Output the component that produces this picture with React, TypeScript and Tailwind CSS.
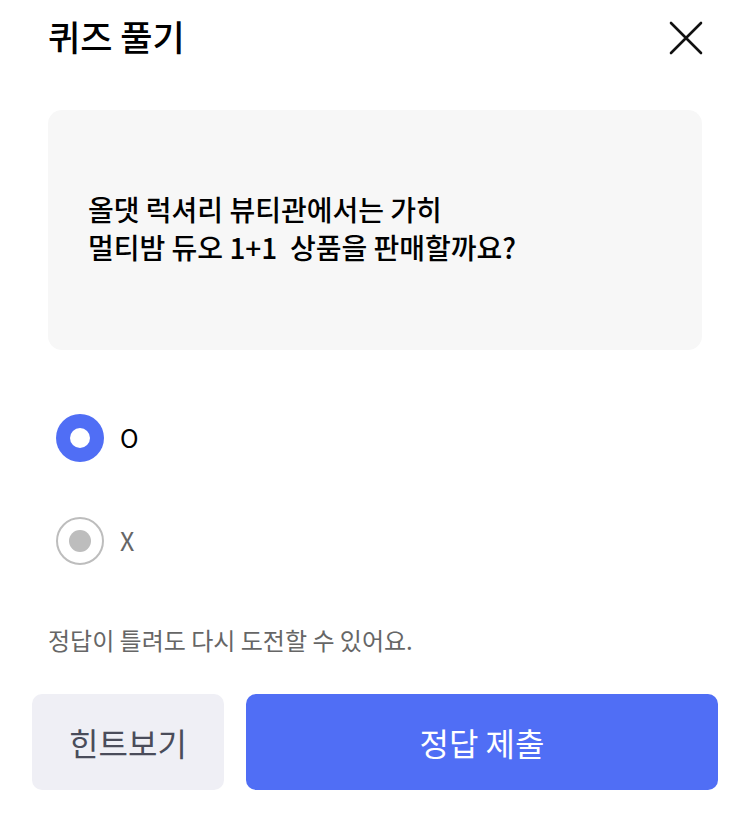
const font = { fontFamily: '"Noto Sans CJK KR", "Noto Sans", sans-serif' };

function Radio({ checked, label }: { checked: boolean; label: string }) {
  return (
    <div className="flex h-[48px] items-center gap-4">
      {checked ? (
        <span className="flex h-[48px] w-[48px] items-center justify-center rounded-full bg-[#506ef5]">
          <span className="h-[20px] w-[20px] rounded-full bg-white" />
        </span>
      ) : (
        <span className="flex h-[48px] w-[48px] items-center justify-center rounded-full border-2 border-[#bdbdbd] bg-white">
          <span className="h-[22px] w-[22px] rounded-full bg-[#bdbdbd]" />
        </span>
      )}
      <span className={checked ? "text-[25px] text-black" : "text-[25px] text-[#666]"}>{label}</span>
    </div>
  );
}

export default function App() {
  return (
    <div className="h-[817px] w-[750px] overflow-hidden bg-white" style={font}>
      <header className="flex items-center justify-between px-12 pt-[12px]">
        <h1 className="text-[35px] font-medium leading-[48px] text-black">퀴즈 풀기</h1>
        <svg width="34" height="34" viewBox="0 0 34 34" className="mr-[-1px] mt-[4px]">
          <path d="M2 2 L32 32 M32 2 L2 32" stroke="#111" strokeWidth="2.6" strokeLinecap="round" />
        </svg>
      </header>

      <section className="mx-12 mt-[50px] flex h-[240px] items-center rounded-[14px] bg-[#f7f7f7] px-10">
        <p className="mt-[-4px] text-[28px] font-medium leading-[38px] text-black">
          올댓 럭셔리 뷰티관에서는 가히
          <br />
          멀티밤 듀오 1+1&nbsp;&nbsp;상품을 판매할까요?
        </p>
      </section>

      <div className="mt-[64px] flex flex-col gap-[55px] pl-14">
        <Radio checked label="O" />
        <Radio checked={false} label="X" />
      </div>

      <p className="mt-[59px] px-12 text-[24px] leading-[32px] text-[#666]">정답이 틀려도 다시 도전할 수 있어요.</p>

      <div className="mt-[38px] flex gap-[22px] px-8">
        <button className="h-[96px] w-[192px] rounded-[10px] bg-[#efeff5] text-[32px] text-[#4a4c5a]">
          힌트보기
        </button>
        <button className="h-[96px] flex-1 rounded-[10px] bg-[#506ef5] text-[32px] text-white">
          정답 제출
        </button>
      </div>
    </div>
  );
}
